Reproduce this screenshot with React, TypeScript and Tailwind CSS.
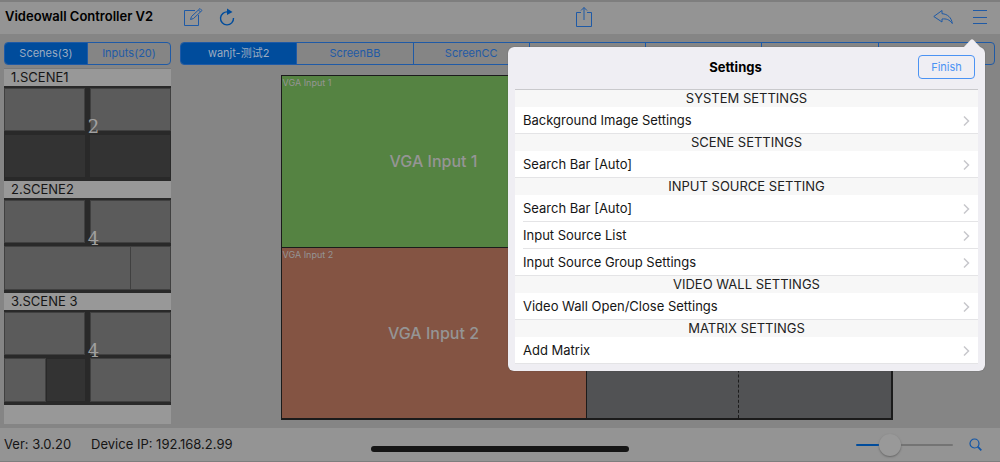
import { useState } from 'react'
import { clsx } from 'clsx'

const screens = ['wanjt-测试2', 'ScreenBB', 'ScreenCC', 'ScreenDD', 'ScreenEE', 'ScreenFF', 'ScreenGG']

// bottom row tiles differ per scene, the top row is always split in half
const scenes = [
  {
    name: '1.SCENE1',
    count: 2,
    bottom: ['w-[82px] border-[#292929] bg-[#333333]', 'w-[82px] ml-auto border-[#292929] bg-[#333333]'],
  },
  {
    name: '2.SCENE2',
    count: 4,
    bottom: ['w-[127px] border-[#404040] bg-[#5b5b5b]', 'w-[41px] -ml-px border-[#404040] bg-[#5b5b5b]'],
  },
  {
    name: '3.SCENE 3',
    count: 4,
    bottom: [
      'w-[42px] border-[#404040] bg-[#5b5b5b]',
      'w-[40px] border-[#292929] bg-[#333333]',
      'w-[81px] ml-auto border-[#404040] bg-[#5b5b5b]',
    ],
  },
]

const settings = [
  { title: 'SYSTEM SETTINGS', rows: ['Background Image Settings'] },
  { title: 'SCENE SETTINGS', rows: ['Search Bar [Auto]'] },
  { title: 'INPUT SOURCE SETTING', rows: ['Search Bar [Auto]', 'Input Source List', 'Input Source Group Settings'] },
  { title: 'VIDEO WALL SETTINGS', rows: ['Video Wall Open/Close Settings'] },
  { title: 'MATRIX SETTINGS', rows: ['Add Matrix'] },
]

function Header() {
  return (
    <header className="flex h-8 items-center justify-between bg-[#949494] pr-[13px] pb-0.5 pl-[5px] text-[#1f5aa6]">
      <div className="flex items-center">
        <h1 className="w-[178px] text-[13px] font-semibold whitespace-nowrap text-black">Videowall Controller V2</h1>
        <button aria-label="Edit" className="mr-4">
          <svg width="20" height="20" viewBox="0 0 20 20" fill="none" stroke="currentColor">
            <path d="M12 3.5H1.5v15h14V8" />
            <path d="M7.5 12.5l1-3L17 1.5l2 2L10.5 11.5zM15.5 3l2 2" />
          </svg>
        </button>
        <button aria-label="Refresh">
          <svg width="16" height="18" viewBox="0 0 16 18" fill="none" stroke="#004c9c" strokeWidth="1.4">
            <path d="M9 4A6.5 6.5 0 1 0 14.5 10" />
            <path d="M8 0.5v6.5L13.5 4z" fill="#004c9c" stroke="none" />
          </svg>
        </button>
      </div>
      <button aria-label="Share">
        <svg width="16" height="22" viewBox="0 0 16 22" fill="none" stroke="currentColor">
          <path d="M5 6.5H0.5v14h15v-14H11M8 14V1.500M5 4.5l3-3 3 3" />
        </svg>
      </button>
      <div className="flex items-center gap-5">
        <button aria-label="Undo">
          <svg width="20" height="16" viewBox="0 0 20 16" fill="none" stroke="currentColor">
            <path
              d="M9 1.5L0.8 7.5L9 13V10C13 9.5 16.5 10.5 19.3 14.5C18.5 8.5 14.5 5 9 4.7z"
              strokeLinejoin="round"
            />
          </svg>
        </button>
        <button aria-label="Menu">
          <svg width="14" height="16" viewBox="0 0 14 16" stroke="currentColor">
            <path d="M0 1.5h14M0 8.5h14M0 14.5h14" />
          </svg>
        </button>
      </div>
    </header>
  )
}

function Segments({ items, active, onSelect }: { items: string[]; active: number; onSelect: (i: number) => void }) {
  return (
    <div className="flex h-[23px] overflow-hidden rounded border border-[#1f5aa6]">
      {items.map((item, index) => (
        <button
          key={item}
          onClick={() => onSelect(index)}
          className={clsx(
            'min-w-0 flex-1 border-[#1f5aa6] text-[11px] whitespace-nowrap not-first:border-l',
            index === active ? 'bg-[#004c9c] text-[#9cabc0]' : 'text-[#1f5aa6]'
          )}
        >
          {item}
        </button>
      ))}
    </div>
  )
}

function SceneList() {
  return (
    <div className="mt-[3px] flex-1 border-t border-[#7b7b7b] bg-[#989898]">
      {scenes.map((scene) => (
        <div key={scene.name}>
          <h2 className="h-[17px] pl-[7px] text-[13px] leading-[17px] text-[#151515]">{scene.name}</h2>
          <div className="relative flex h-[95px] flex-col gap-[3px] bg-[#292929] pt-0.5">
            <div className="flex h-[43px] justify-between">
              <span className="w-[81px] border border-[#404040] bg-[#5b5b5b]" />
              <span className="w-[81px] border border-[#404040] bg-[#5b5b5b]" />
            </div>
            <div className="flex h-11">
              {scene.bottom.map((tile, i) => (
                <span key={i} className={clsx('border', tile)} />
              ))}
            </div>
            <span className="absolute inset-0 flex items-center justify-center pb-3.5 pl-3 font-['DejaVu_Serif',serif] text-lg text-[#a0a0a0]">
              {scene.count}
            </span>
          </div>
        </div>
      ))}
    </div>
  )
}

function Source({ name, color }: { name: string; color: string }) {
  return (
    <div className={clsx('relative flex items-center justify-center text-[#959595]', color)}>
      <span className="absolute top-0 left-px text-[9px]">{name}</span>
      <span className="text-base font-medium">{name}</span>
    </div>
  )
}

function Wall() {
  return (
    <div className="mx-auto mt-[10px] mb-1 flex w-full flex-1 justify-center pr-0.5">
      <div className="grid w-[612px] max-w-full grid-cols-2 grid-rows-2 gap-px border border-r-2 border-b-2 border-[#1b1b1b] bg-[#1b1b1b]">
        <Source name="VGA Input 1" color="bg-[#558342]" />
        <div className="bg-[#515254]" />
        <Source name="VGA Input 2" color="bg-[#845443]" />
        <div className="grid grid-cols-2 bg-[#515254]">
          <div className="border-r border-dashed border-[#1b1b1b]" />
        </div>
      </div>
    </div>
  )
}

function SettingsPopover() {
  return (
    <section
      role="dialog"
      aria-label="Settings"
      className="absolute top-[45px] right-[15px] w-[477px] rounded-md bg-[#efeef3] px-[7px] pb-[7px] shadow-[0_0_1px_#444444]"
    >
      <svg className="absolute -top-2 right-1 text-[#efeef3]" width="18" height="9" viewBox="0 0 18 9" fill="currentColor">
        <path d="M0 9L7.5 1Q9 -0.5 10.5 1L18 9z" />
      </svg>
      <div className="relative flex h-[43px] items-center justify-center border-b border-[#c9c9cc]">
        <h2 className="pr-[22px] text-[13px] font-bold text-black">Settings</h2>
        <button className="absolute top-2 right-[3px] h-6 w-[57px] rounded border border-[#4b93f3] text-[11px] text-[#4b93f3]">
          Finish
        </button>
      </div>
      <div className="max-h-[274px] overflow-hidden bg-white">
        {settings.map((group) => (
          <div key={group.title}>
            <h3 className="h-[17px] bg-[#f7f7f7] text-center text-[13px] leading-[17px] text-[#222222]">{group.title}</h3>
            <ul>
              {group.rows.map((row) => (
                <li key={row} className="ml-2 border-b border-[#e4e4e6] last:ml-0 last:pl-2">
                  <button className="flex h-[26px] w-full items-center justify-between pt-px pr-2 text-[13px] text-[#151515]">
                    {row}
                    <svg width="7" height="10" viewBox="0 0 7 10" fill="none" stroke="#c7c7cc" strokeWidth="1.5">
                      <path d="M1 0.5L5.5 5L1 9.5" />
                    </svg>
                  </button>
                </li>
              ))}
            </ul>
          </div>
        ))}
      </div>
    </section>
  )
}

function Footer() {
  const [zoom, setZoom] = useState(30)

  return (
    <footer className="relative mt-1 flex h-[33px] items-center bg-[#949494] pr-[18px] pl-1 text-[13px] text-[#151515]">
      <span>Ver: 3.0.20</span>
      <span className="ml-5">Device IP: 192.168.2.99</span>
      <div className="absolute bottom-[9px] left-1/2 h-1.5 w-[258px] -translate-x-1/2 rounded-full bg-[#151515]" />
      <input
        type="range"
        aria-label="Zoom"
        value={zoom}
        onChange={(e) => setZoom(Number(e.target.value))}
        style={{ backgroundImage: `linear-gradient(to right, #004c9c ${zoom}%, #747474 ${zoom}%)` }}
        className="mr-4 ml-auto h-0.5 w-[97px] appearance-none rounded-full [&::-webkit-slider-thumb]:size-[22px] [&::-webkit-slider-thumb]:appearance-none [&::-webkit-slider-thumb]:rounded-full [&::-webkit-slider-thumb]:bg-[#999999] [&::-webkit-slider-thumb]:shadow-[0_1px_2px_#666666]"
      />
      <button aria-label="Search">
        <svg width="13" height="13" viewBox="0 0 13 13" fill="none" stroke="#1256a8" strokeWidth="1.2">
          <circle cx="5.5" cy="5.5" r="4.5" />
          <path d="M8.7 8.7L12.3 12.3" strokeWidth="1.8" />
        </svg>
      </button>
    </footer>
  )
}

export default function App() {
  const [source, setSource] = useState(0)
  const [screen, setScreen] = useState(0)

  return (
    <div className="relative flex min-h-screen flex-col border-t-2 border-b border-[#7e7e7e] bg-[#858585] font-[Inter,'Noto_Sans_CJK_SC',sans-serif]">
      <Header />
      <main className="flex flex-1 gap-[9px] pt-2 pr-[5px] pl-1">
        <aside className="flex w-[167px] shrink-0 flex-col">
          <Segments items={['Scenes(3)', 'Inputs(20)']} active={source} onSelect={setSource} />
          <SceneList />
        </aside>
        <div className="flex min-w-0 flex-1 flex-col">
          <Segments items={screens} active={screen} onSelect={setScreen} />
          <Wall />
        </div>
      </main>
      <Footer />
      <SettingsPopover />
    </div>
  )
}
